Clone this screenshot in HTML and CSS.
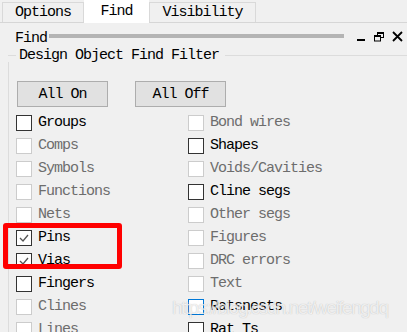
FILE: index.html
```html
<!DOCTYPE html>
<html>
<head>
    <meta charset="UTF-8">
    <title>Find</title>
    <link rel="stylesheet" href="styles.css">
</head>
<body>
    <div class="tabs">
        <div class="tab tab-options">Options</div>
        <div class="tab tab-find active">Find</div>
        <div class="tab tab-vis">Visibility</div>
    </div>

    <div class="panel-head">
        <span class="panel-title">Find</span>
        <span class="grip"></span>
        <span class="win-btns">
            <svg width="10" height="10" viewBox="0 0 10 10"><rect x="1" y="7" width="8" height="2" fill="#000"/></svg>
            <svg width="10" height="10" viewBox="0 0 10 10"><rect x="3.5" y="0.5" width="6" height="5" fill="none" stroke="#000"/><rect x="3" y="0" width="7" height="2" fill="#000"/><rect x="0.5" y="3.5" width="6" height="5.5" fill="#f0f0f0" stroke="#000"/><rect x="0" y="3" width="7" height="2" fill="#000"/></svg>
            <svg width="11" height="11" viewBox="0 0 11 11"><path d="M1 1 L10 10 M10 1 L1 10" stroke="#000" stroke-width="1.8"/></svg>
        </span>
    </div>

    <div class="group">
        <div class="group-head">
            <span class="tick"></span>
            <span class="group-title">Design Object Find Filter</span>
            <span class="line"></span>
        </div>
        <div class="group-body">
            <div class="buttons">
                <button>All On</button>
                <button>All Off</button>
            </div>
            <div class="grid">
                <div class="col">
                    <div class="item"><span class="box"></span>Groups</div>
                    <div class="item off"><span class="box"></span>Comps</div>
                    <div class="item off"><span class="box"></span>Symbols</div>
                    <div class="item off"><span class="box"></span>Functions</div>
                    <div class="item off"><span class="box"></span>Nets</div>
                    <div class="item"><span class="box"><svg width="14" height="14" viewBox="0 0 14 14"><path d="M3 7 L6 10 L11 4" fill="none" stroke="#555" stroke-width="1.3"/></svg></span>Pins</div>
                    <div class="item"><span class="box"><svg width="14" height="14" viewBox="0 0 14 14"><path d="M3 7 L6 10 L11 4" fill="none" stroke="#555" stroke-width="1.3"/></svg></span>Vias</div>
                    <div class="item"><span class="box"></span>Fingers</div>
                    <div class="item off"><span class="box"></span>Clines</div>
                    <div class="item off"><span class="box"></span>Lines</div>
                </div>
                <div class="col">
                    <div class="item off"><span class="box"></span>Bond wires</div>
                    <div class="item"><span class="box"></span>Shapes</div>
                    <div class="item off"><span class="box"></span>Voids/Cavities</div>
                    <div class="item"><span class="box"></span>Cline segs</div>
                    <div class="item off"><span class="box"></span>Other segs</div>
                    <div class="item off"><span class="box"></span>Figures</div>
                    <div class="item off"><span class="box"></span>DRC errors</div>
                    <div class="item off"><span class="box"></span>Text</div>
                    <div class="item"><span class="box focus"></span>Ratsnests</div>
                    <div class="item"><span class="box"></span>Rat Ts</div>
                </div>
            </div>
        </div>
    </div>

    <div class="highlight"></div>
    <div class="watermark">https://blog.csdn.net/weifengdq</div>
</body>
</html>
```

FILE: styles.css
```css
body {
    margin: 0;
    background-color: #f0f0f0;
    font-family: "Liberation Mono", monospace;
    font-size: 15px;
    letter-spacing: -1px;
    color: #000;
    overflow: hidden;
    height: 332px;
    position: relative;
}

.tabs {
    display: flex;
    height: 22px;
    border-bottom: 1px solid #d6d6d6;
    padding-left: 2px;
}

.tab {
    margin-top: 2px;
    height: 20px;
    line-height: 20px;
    text-align: center;
    border: 1px solid #d9d9d9;
    border-bottom: none;
    box-sizing: border-box;
    background-color: #f0f0f0;
}

.tab-options {
    width: 82px;
}

.tab-find {
    width: 65px;
}

.tab-vis {
    width: 107px;
}

.tab.active {
    margin-top: 0;
    height: 23px;
    background-color: #fff;
    border-color: #fff;
    line-height: 22px;
}

.panel-head {
    display: flex;
    align-items: center;
    height: 25px;
    padding-left: 15px;
    padding-right: 4px;
}

.panel-title {
    margin-top: 5px;
}

.grip {
    flex: 1;
    height: 4px;
    background-color: #b4b4b4;
    margin-left: 2px;
    align-self: flex-start;
    margin-top: 11px;
    margin-right: 12px;
}

.win-btns {
    display: flex;
    gap: 8px;
    align-items: flex-end;
    margin-top: 2px;
}

.group {
    margin-left: 8px;
}

.group-head {
    display: flex;
    align-items: center;
    height: 14px;
}

.group-head .tick {
    width: 8px;
    border-top: 1px solid #dcdcdc;
    margin-top: 1px;
}

.group-head .line {
    flex: 1;
    border-top: 1px solid #dcdcdc;
    margin-left: 6px;
    margin-top: 1px;
}

.group-title {
    margin-left: 3px;
}

.group-body {
    border-left: 1px solid #dcdcdc;
    padding-left: 7px;
    padding-top: 19px;
    height: 280px;
}

.buttons {
    display: flex;
    gap: 27px;
    padding-left: 1px;
    margin-bottom: 4px;
}

button {
    width: 91px;
    height: 26px;
    border: 1px solid #adadad;
    background-color: #e1e1e1;
    font-family: inherit;
    font-size: 15px;
    letter-spacing: -1px;
    color: #000;
    padding: 0;
}

.grid {
    display: flex;
}

.col {
    width: 172px;
}

.item {
    display: flex;
    align-items: center;
    height: 23px;
}

.item.off {
    color: #6d6d6d;
}

.box {
    width: 16px;
    height: 16px;
    box-sizing: border-box;
    border: 1px solid #333;
    background-color: #fff;
    margin-right: 6px;
    display: flex;
    align-items: center;
    justify-content: center;
    flex-shrink: 0;
}

.item.off .box {
    border-color: #cccccc;
}

.box.focus {
    border-color: #0078d7;
}

.highlight {
    position: absolute;
    left: 3px;
    top: 223px;
    width: 109px;
    height: 36px;
    border: 5px solid #ff0000;
    border-radius: 3px;
}

.watermark {
    position: absolute;
    left: 172px;
    top: 297px;
    font-family: "Liberation Sans", sans-serif;
    font-size: 19px;
    letter-spacing: -1.5px;
    color: rgba(255, 255, 255, 0.75);
    text-shadow: 0 0 1px rgba(0, 0, 0, 0.25);
}
```
